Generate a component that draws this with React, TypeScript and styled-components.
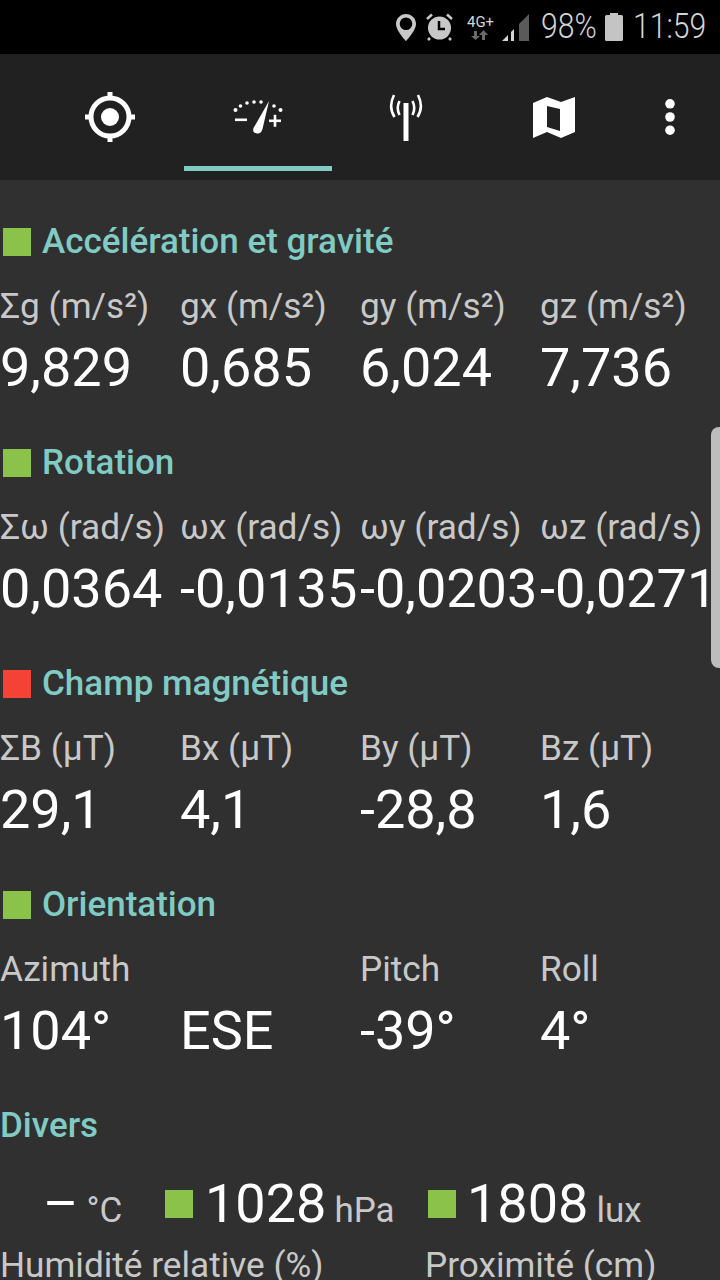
import React, {FC} from 'react';
import styled, {createGlobalStyle} from 'styled-components';

const GlobalStyle = createGlobalStyle`
  html, body {
    margin: 0;
    padding: 0;
    background: #303030;
    font-family: Roboto, "Noto Sans", sans-serif;
  }
`;

//region Styled
const Screen = styled.div`
  position: relative;
  width: 720px;
  height: 1280px;
  overflow: hidden;
  background: #303030;
`;

const StatusBar = styled.div`
  height: 54px;
  box-sizing: border-box;
  background: #000;
  display: flex;
  align-items: center;
  justify-content: flex-end;
  padding-right: 13px;
  color: #d4d4d4;
`;

const StatusIcon = styled.svg<{$mr: number}>`
  display: block;
  flex: none;
  margin-right: ${p => p.$mr}px;
`;

// the status bar font is narrower than Roboto, so the text is squeezed into a fixed box
const StatusText = styled.span<{$width: number; $mr?: number}>`
  display: block;
  flex: none;
  width: ${p => p.$width}px;
  margin-right: ${p => p.$mr ?? 0}px;
  white-space: nowrap;
  font-size: 35px;
  font-weight: 300;
  line-height: 54px;
  transform: scaleX(0.86);
  transform-origin: left center;
`;

const Toolbar = styled.div`
  height: 126px;
  background: #212121;
  display: flex;
  padding-left: 36px;
`;

const Tab = styled.div<{$active?: boolean}>`
  position: relative;
  width: 148px;
  display: flex;
  justify-content: center;
  align-items: center;

  &::after {
    content: "";
    display: ${p => (p.$active ? 'block' : 'none')};
    position: absolute;
    left: 0;
    right: 0;
    bottom: 9px;
    height: 5px;
    background: #80cbc4;
  }
`;

const MenuTab = styled.div`
  width: 84px;
  display: flex;
  justify-content: center;
  align-items: center;
`;

const Content = styled.div`
  padding-top: 42px;
`;

const Section = styled.section`
  height: 221px;
`;

const TitleRow = styled.div`
  display: flex;
  align-items: center;
  gap: 11px;
  height: 40px;
`;

const Dot = styled.span<{$color: string}>`
  display: inline-block;
  flex: none;
  width: 28px;
  height: 28px;
  margin-left: 3px;
  background: ${p => p.$color};
`;

const Title = styled.h2`
  margin: 0;
  font-size: 35px;
  line-height: 40px;
  font-weight: 500;
  color: #80cbc4;
`;

const Grid = styled.div`
  display: grid;
  grid-template-columns: repeat(4, 180px);
  margin-top: 24px;
`;

const Cell = styled.div`
  min-width: 0;
  white-space: nowrap;
`;

const Label = styled.div`
  font-size: 35.2px;
  line-height: 40px;
  color: #c8c8c8;
`;

const Value = styled.div`
  font-size: 54px;
  line-height: 60px;
  margin-top: 12px;
  color: #fff;
`;

const MiscRow = styled.div`
  display: flex;
  align-items: baseline;
  height: 64px;
  margin-top: 26px;
`;

const Metric = styled.div<{$width: number; $indent: number}>`
  width: ${p => p.$width}px;
  padding-left: ${p => p.$indent}px;
  box-sizing: border-box;
  display: flex;
  align-items: baseline;
  white-space: nowrap;
`;

const MetricDot = styled.span<{$gap: number}>`
  display: inline-block;
  flex: none;
  width: 28px;
  height: 28px;
  margin-right: ${p => p.$gap}px;
  background: #8bc34a;
  align-self: center;
`;

const MetricValue = styled.span`
  font-size: 54px;
  line-height: 64px;
  color: #fff;
`;

const Unit = styled.span`
  font-size: 35px;
  color: #c8c8c8;
  margin-left: 8px;
`;

const BottomLabels = styled.div`
  display: flex;
  margin-top: 9px;
`;

const BottomLabel = styled(Label)<{$width: number}>`
  width: ${p => p.$width}px;
  white-space: nowrap;
`;

const ScrollThumb = styled.div`
  position: absolute;
  right: 0;
  top: 427px;
  width: 9px;
  height: 241px;
  background: #bdbdbd;
  border-radius: 8px 0 0 8px;
`;
//endregion

interface Item {
    label: string,
    value: string,
}

interface Group {
    title: string,
    dot?: string,
    items: Item[],
}

const GREEN = '#8bc34a';
const RED = '#f44336';

const groups: Group[] = [
    {
        title: 'Accélération et gravité',
        dot: GREEN,
        items: [
            {label: 'Σg (m/s²)', value: '9,829'},
            {label: 'gx (m/s²)', value: '0,685'},
            {label: 'gy (m/s²)', value: '6,024'},
            {label: 'gz (m/s²)', value: '7,736'},
        ],
    },
    {
        title: 'Rotation',
        dot: GREEN,
        items: [
            {label: 'Σω (rad/s)', value: '0,0364'},
            {label: 'ωx (rad/s)', value: '-0,0135'},
            {label: 'ωy (rad/s)', value: '-0,0203'},
            {label: 'ωz (rad/s)', value: '-0,0271'},
        ],
    },
    {
        title: 'Champ magnétique',
        dot: RED,
        items: [
            {label: 'ΣB (µT)', value: '29,1'},
            {label: 'Bx (µT)', value: '4,1'},
            {label: 'By (µT)', value: '-28,8'},
            {label: 'Bz (µT)', value: '1,6'},
        ],
    },
    {
        title: 'Orientation',
        dot: GREEN,
        items: [
            {label: 'Azimuth', value: '104°'},
            {label: '\u00a0', value: 'ESE'},
            {label: 'Pitch', value: '-39°'},
            {label: 'Roll', value: '4°'},
        ],
    },
];

const GpsIcon: FC = () => (
    <svg width="50" height="50" viewBox="0 0 50 50">
        <circle cx="25" cy="25" r="19" fill="none" stroke="#fff" strokeWidth="5" />
        <circle cx="25" cy="25" r="9" fill="#fff" />
        <path d="M25 0v8M25 42v8M0 25h8M42 25h8" stroke="#fff" strokeWidth="5" />
    </svg>
);

const GaugeIcon: FC = () => (
    <svg width="50" height="35" viewBox="0 0 50 35" fill="#fff">
        <circle cx="2.500" cy="10" r="2" />
        <circle cx="7.500" cy="6" r="1.800" />
        <circle cx="14" cy="3" r="1.800" />
        <circle cx="21" cy="2" r="1.800" />
        <circle cx="28" cy="2" r="1.800" />
        <circle cx="41" cy="6" r="1.800" />
        <circle cx="47.500" cy="10" r="2" />
        <path d="M36 1 L29.500 29 Q28 34 24 33.500 Q19 33 20.500 28 Z" />
        <path d="M2 18.500h12v2.600H2z" />
        <path d="M36 19.500h12v2.600H36z" />
        <path d="M40.700 14.800h2.600v12h-2.600z" />
    </svg>
);

const AntennaIcon: FC = () => (
    <svg width="34" height="47" viewBox="0 0 34 47" fill="none" stroke="#fff">
        <path d="M17 9v38" strokeWidth="5" />
        <path d="M10.500 7 Q7 14 10.500 21" strokeWidth="2.600" />
        <path d="M23.500 7 Q27 14 23.500 21" strokeWidth="2.600" />
        <path d="M5 1 Q-1 13 5.500 23" strokeWidth="2.600" />
        <path d="M29 1 Q35 13 28.500 23" strokeWidth="2.600" />
    </svg>
);

const MapIcon: FC = () => (
    <svg width="42" height="41" viewBox="0 0 42 41">
        <path fillRule="evenodd" fill="#fff" d="M0 6 L14 0 L28 5 L42 0 V35 L28 41 L14 35 L0 41 Z M14 9 V30 L27 34 V12 Z" />
    </svg>
);

const MoreIcon: FC = () => (
    <svg width="10" height="36" viewBox="0 0 10 36" fill="#fff">
        <circle cx="5" cy="4.800" r="4.800" />
        <circle cx="5" cy="18" r="4.800" />
        <circle cx="5" cy="31.200" r="4.800" />
    </svg>
);

const App: FC = () => (
    <Screen>
        <GlobalStyle />
        <StatusBar>
            <StatusIcon $mr={10} width="20" height="27" viewBox="0 0 20 27">
                <path fillRule="evenodd" fill="#c8c8c8" d="M10 0C4.500 0 0 4.400 0 9.900 0 16.500 10 27 10 27S20 16.500 20 9.900C20 4.400 15.500 0 10 0Z M10 3.500A6.300 6.300 0 1 1 10 16.100A6.300 6.300 0 0 1 10 3.500Z" />
            </StatusIcon>
            <StatusIcon $mr={14} width="27" height="28" viewBox="0 0 27 28">
                <circle cx="13.500" cy="15" r="11.500" fill="#c8c8c8" />
                <path d="M13 8v8h6" fill="none" stroke="#000" strokeWidth="2.500" />
                <path d="M1 6 L6 1.500 M26 6 L21 1.500 M4 25 L2 27 M23 25 L25 27" stroke="#c8c8c8" strokeWidth="2.500" />
            </StatusIcon>
            <StatusIcon $mr={8} width="27" height="25" viewBox="0 0 27 25">
                <text x="0" y="12" fontFamily="Roboto, sans-serif" fontSize="14" fill="#d4d4d4" textLength="27" lengthAdjust="spacingAndGlyphs">4G+</text>
                <path d="M7 16h3v5h3l-4.500 4-4.500-4h3z" fill="#6a6a6a" />
                <path d="M15 25v-5h-3l4.500-5 4.500 5h-3v5z" fill="#6a6a6a" />
            </StatusIcon>
            <StatusIcon $mr={12} width="27" height="27" viewBox="0 0 27 27">
                <path d="M0 27 L6 21 V27 Z" fill="#d4d4d4" />
                <path d="M9 18 L12 15 V27 H9 Z" fill="#d4d4d4" />
                <path d="M17 10 L27 0 V27 H17 Z" fill="#5a5a5a" />
            </StatusIcon>
            <StatusText $width={54} $mr={10}>98%</StatusText>
            <StatusIcon $mr={10} width="18" height="28" viewBox="0 0 18 28">
                <path d="M5 0h8v2h3.500a1.500 1.500 0 0 1 1.500 1.500V26.500a1.500 1.500 0 0 1-1.500 1.500H1.500A1.500 1.500 0 0 1 0 26.500V3.500A1.500 1.500 0 0 1 1.500 2H5Z" fill="#c4c4c4" />
            </StatusIcon>
            <StatusText $width={74}>11:59</StatusText>
        </StatusBar>

        <Toolbar>
            <Tab><GpsIcon /></Tab>
            <Tab $active><GaugeIcon /></Tab>
            <Tab><AntennaIcon /></Tab>
            <Tab><MapIcon /></Tab>
            <MenuTab><MoreIcon /></MenuTab>
        </Toolbar>

        <Content>
            {groups.map(group => (
                <Section key={group.title}>
                    <TitleRow>
                        {group.dot && <Dot $color={group.dot} />}
                        <Title>{group.title}</Title>
                    </TitleRow>
                    <Grid>
                        {group.items.map((item, index) => (
                            <Cell key={index}>
                                <Label>{item.label}</Label>
                                <Value>{item.value}</Value>
                            </Cell>
                        ))}
                    </Grid>
                </Section>
            ))}
            <Section>
                <TitleRow>
                    <Title>Divers</Title>
                </TitleRow>
                <MiscRow>
                    <Metric $width={165} $indent={43}>
                        <MetricValue>–</MetricValue>
                        <Unit>°C</Unit>
                    </Metric>
                    <Metric $width={263} $indent={0}>
                        <MetricDot $gap={12} />
                        <MetricValue>1028</MetricValue>
                        <Unit>hPa</Unit>
                    </Metric>
                    <Metric $width={260} $indent={0}>
                        <MetricDot $gap={11} />
                        <MetricValue>1808</MetricValue>
                        <Unit>lux</Unit>
                    </Metric>
                </MiscRow>
                <BottomLabels>
                    <BottomLabel $width={425}>Humidité relative (%)</BottomLabel>
                    <BottomLabel $width={290}>Proximité (cm)</BottomLabel>
                </BottomLabels>
            </Section>
        </Content>

        <ScrollThumb />
    </Screen>
);

export default App;
